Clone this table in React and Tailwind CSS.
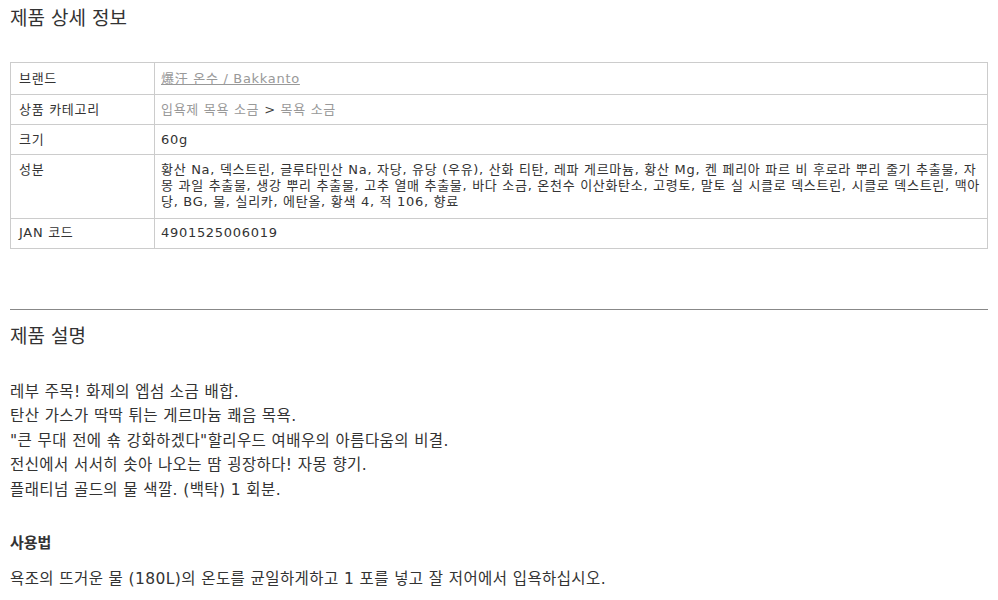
import React from 'react';

const rows = [
  { label: '브랜드', value: <a href="#" className="text-[#999] underline">爆汗 온수 / Bakkanto</a>, pad: 'py-[7.5px]' },
  { label: '상품 카테고리', value: <span className="text-[#999]">입욕제 목욕 소금 <span className="text-[#444]">&gt;</span> 목욕 소금</span> },
  { label: '크기', value: '60g' },
  {
    label: '성분',
    pad: 'pt-[7px] pb-[7.5px]',
    value:
      '황산 Na, 덱스트린, 글루타민산 Na, 자당, 유당 (우유), 산화 티탄, 레파 게르마늄, 황산 Mg, 켄 페리아 파르 비 후로라 뿌리 줄기 추출물, 자몽 과일 추출물, 생강 뿌리 추출물, 고추 열매 추출물, 바다 소금, 온천수 이산화탄소, 고령토, 말토 실 시클로 덱스트린, 시클로 덱스트린, 맥아당, BG, 물, 실리카, 에탄올, 황색 4, 적 106, 향료',
  },
  { label: 'JAN 코드', value: '4901525006019' },
];

const descLines = [
  '레부 주목! 화제의 엡섬 소금 배합.',
  '탄산 가스가 딱딱 튀는 게르마늄 쾌음 목욕.',
  '"큰 무대 전에 쇾 강화하겠다"할리우드 여배우의 아름다움의 비결.',
  '전신에서 서서히 솟아 나오는 땀 굉장하다! 자몽 향기.',
  '플래티넘 골드의 물 색깔. (백탁) 1 회분.',
];

export default function App() {
  return (
    <div className="min-h-screen bg-white px-[10px] pt-[5px] text-[13px] text-[#333] font-['DejaVu_Sans','Noto_Sans_CJK_KR',sans-serif]">
      {/* Spec table */}
      <h2 className="text-[19px] leading-[26px] font-normal">제품 상세 정보</h2>
      <table className="mt-[31px] w-full border-collapse tracking-[0.7px]">
        <tbody>
          {rows.map((r) => (
            <tr key={r.label}>
              <td className={`w-[144px] border border-[#ccc] px-[8px] align-top leading-[16px] ${r.pad || 'py-[6.5px]'}`}>{r.label}</td>
              <td className={`border border-[#ccc] px-[6px] align-top leading-[16px] ${r.pad || 'py-[6.5px]'}`}>{r.value}</td>
            </tr>
          ))}
        </tbody>
      </table>

      <hr className="mt-[60px] border-0 border-t border-[#888]" />

      {/* Description */}
      <h2 className="mt-[13px] text-[19px] leading-[26px] font-normal">제품 설명</h2>
      <div className="mt-[31px] text-[15.5px] leading-[24.5px] tracking-[0.4px]">
        {descLines.map((l) => (
          <p key={l}>{l}</p>
        ))}
      </div>
      <h3 className="mt-[29px] text-[15px] font-bold leading-[24px]">사용법</h3>
      <p className="mt-[12px] text-[15.5px] leading-[24px] tracking-[0.4px]">욕조의 뜨거운 물 (180L)의 온도를 균일하게하고 1 포를 넣고 잘 저어에서 입욕하십시오.</p>
    </div>
  );
}
